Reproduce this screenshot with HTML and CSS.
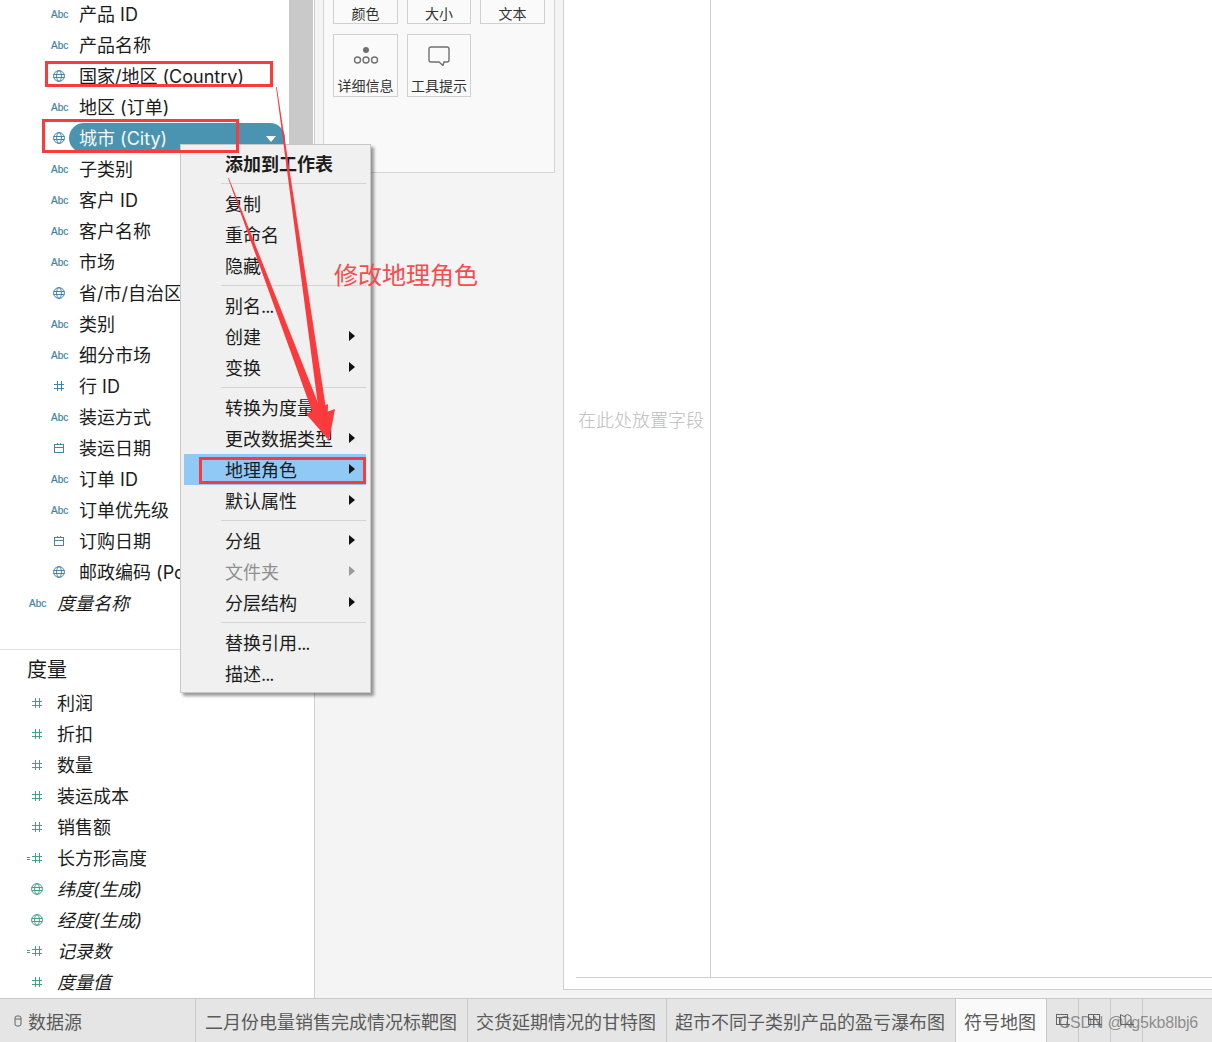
FILE: index.html
```html
<!DOCTYPE html>
<html lang="zh-CN">
<head>
  <meta charset="UTF-8" />
  <title>符号地图</title>
  <link rel="stylesheet" href="styles.css">
</head>
<body>
  <svg class="defs" width="0" height="0">
    <symbol id="globe" viewBox="0 0 12 12">
      <circle cx="6" cy="6" r="5.400" />
      <ellipse cx="6" cy="6" rx="2.400" ry="5.400" />
      <path d="M.6 4.500h10.800M.6 7.500h10.800" />
    </symbol>
    <symbol id="hash" viewBox="0 0 12 12">
      <path d="M4.500 1v10M8.500 1v10M1 4.500h10M1 8.500h10" />
    </symbol>
    <symbol id="date" viewBox="0 0 12 12">
      <rect x="1.500" y="2.500" width="9" height="8" />
      <path d="M1.500 5.500h9M4.500 1v2M7.500 1v2" />
    </symbol>
  </svg>

  <div class="app">
    <div class="main">
      <aside class="side">
        <div class="dims">
          <div class="dim-list">
            <div class="row dim"><span class="abc">Abc</span><span class="name">产品 ID</span></div>
            <div class="row dim"><span class="abc">Abc</span><span class="name">产品名称</span></div>
            <div class="row dim"><span class="ico"><svg><use href="#globe"/></svg></span><span class="name">国家/地区 (Country)</span></div>
            <div class="row dim"><span class="abc">Abc</span><span class="name">地区 (订单)</span></div>
            <div class="row dim selected"><span class="ico"><svg><use href="#globe"/></svg></span><span class="name">城市 (City)<i class="caret"></i></span></div>
            <div class="row dim"><span class="abc">Abc</span><span class="name">子类别</span></div>
            <div class="row dim"><span class="abc">Abc</span><span class="name">客户 ID</span></div>
            <div class="row dim"><span class="abc">Abc</span><span class="name">客户名称</span></div>
            <div class="row dim"><span class="abc">Abc</span><span class="name">市场</span></div>
            <div class="row dim"><span class="ico"><svg><use href="#globe"/></svg></span><span class="name">省/市/自治区</span></div>
            <div class="row dim"><span class="abc">Abc</span><span class="name">类别</span></div>
            <div class="row dim"><span class="abc">Abc</span><span class="name">细分市场</span></div>
            <div class="row dim"><span class="ico"><svg><use href="#hash"/></svg></span><span class="name">行 ID</span></div>
            <div class="row dim"><span class="abc">Abc</span><span class="name">装运方式</span></div>
            <div class="row dim"><span class="ico"><svg><use href="#date"/></svg></span><span class="name">装运日期</span></div>
            <div class="row dim"><span class="abc">Abc</span><span class="name">订单 ID</span></div>
            <div class="row dim"><span class="abc">Abc</span><span class="name">订单优先级</span></div>
            <div class="row dim"><span class="ico"><svg><use href="#date"/></svg></span><span class="name">订购日期</span></div>
            <div class="row dim"><span class="ico"><svg><use href="#globe"/></svg></span><span class="name">邮政编码 (Po</span></div>
            <div class="row outer"><span class="abc">Abc</span><span class="name em">度量名称</span></div>
          </div>
          <div class="scrollbar"></div>
        </div>

        <div class="measures">
          <div class="measures-title">度量</div>
          <div class="row meas"><span class="ico"><svg><use href="#hash"/></svg></span><span class="name">利润</span></div>
          <div class="row meas"><span class="ico"><svg><use href="#hash"/></svg></span><span class="name">折扣</span></div>
          <div class="row meas"><span class="ico"><svg><use href="#hash"/></svg></span><span class="name">数量</span></div>
          <div class="row meas"><span class="ico"><svg><use href="#hash"/></svg></span><span class="name">装运成本</span></div>
          <div class="row meas"><span class="ico"><svg><use href="#hash"/></svg></span><span class="name">销售额</span></div>
          <div class="row meas"><span class="ico calc"><b></b><svg><use href="#hash"/></svg></span><span class="name">长方形高度</span></div>
          <div class="row meas"><span class="ico"><svg><use href="#globe"/></svg></span><span class="name em">纬度(生成)</span></div>
          <div class="row meas"><span class="ico"><svg><use href="#globe"/></svg></span><span class="name em">经度(生成)</span></div>
          <div class="row meas"><span class="ico calc"><b></b><svg><use href="#hash"/></svg></span><span class="name em">记录数</span></div>
          <div class="row meas"><span class="ico"><svg><use href="#hash"/></svg></span><span class="name em">度量值</span></div>
        </div>
      </aside>

      <section class="middle">
        <div class="marks">
          <div class="mark-grid">
            <div class="mark tall"><span>颜色</span></div>
            <div class="mark tall"><span>大小</span></div>
            <div class="mark tall"><span>文本</span></div>
            <div class="mark">
              <svg class="mark-icon" viewBox="0 0 26 20">
                <circle class="solid" cx="13" cy="4" r="3" />
                <circle cx="4.500" cy="14" r="3" />
                <circle cx="13" cy="14" r="3" />
                <circle cx="21.500" cy="14" r="3" />
              </svg>
              <span>详细信息</span>
            </div>
            <div class="mark">
              <svg class="mark-icon" viewBox="0 0 26 20">
                <path d="M5 1h16a2 2 0 0 1 2 2v11a2 2 0 0 1-2 2h-3l-1 3.500-4-3.500H5a2 2 0 0 1-2-2V3a2 2 0 0 1 2-2z" />
              </svg>
              <span>工具提示</span>
            </div>
          </div>
        </div>
      </section>

      <section class="view">
        <div class="view-top">
          <div class="drop-col">在此处放置字段</div>
        </div>
        <div class="view-bottom"></div>
      </section>
    </div>

    <footer class="tabs">
      <div class="tab source">
        <svg class="db" viewBox="0 0 8 12"><rect x="1" y="1" width="6" height="10" rx="2" /><path d="M1 4h6" /></svg>
        数据源
      </div>
      <div class="tab wide">二月份电量销售完成情况标靶图</div>
      <div class="tab tight">交货延期情况的甘特图</div>
      <div class="tab tight">超市不同子类别产品的盈亏瀑布图</div>
      <div class="tab tight active">符号地图</div>
      <div class="tab-btn"><svg viewBox="0 0 22 18"><rect x="4.500" y="4.500" width="11" height="10" /><path d="M4.500 7.500h11M7.500 7.500v7M12 14.500h6M15 11.500v6" /></svg></div>
      <div class="tab-btn"><svg viewBox="0 0 22 18"><rect x="4.500" y="4.500" width="11" height="10" /><path d="M9.500 4.500v10M4.500 9.500h11M12 14.500h6M15 11.500v6" /></svg></div>
      <div class="tab-btn"><svg viewBox="0 0 22 18"><path d="M4.500 4.500l3.500 2 3.500-2 3.500 2v8h-10.500zM12 14.500h6M15 11.500v6" /></svg></div>
    </footer>
  </div>

  <div class="menu">
    <div class="menu-item strong">添加到工作表</div>
    <div class="sep"></div>
    <div class="menu-item">复制</div>
    <div class="menu-item">重命名</div>
    <div class="menu-item">隐藏</div>
    <div class="sep"></div>
    <div class="menu-item">别名<span class="dots">...</span></div>
    <div class="menu-item sub">创建</div>
    <div class="menu-item sub">变换</div>
    <div class="sep"></div>
    <div class="menu-item">转换为度量</div>
    <div class="menu-item sub">更改数据类型</div>
    <div class="menu-item sub hot">地理角色</div>
    <div class="menu-item sub">默认属性</div>
    <div class="sep"></div>
    <div class="menu-item sub">分组</div>
    <div class="menu-item sub off">文件夹</div>
    <div class="menu-item sub">分层结构</div>
    <div class="sep"></div>
    <div class="menu-item">替换引用<span class="dots">...</span></div>
    <div class="menu-item">描述<span class="dots">...</span></div>
  </div>

  <!-- annotations drawn on top of the screenshot -->
  <div class="box box-country"></div>
  <div class="box box-city"></div>
  <div class="box box-geo"></div>
  <svg class="arrows" viewBox="0 0 1212 1042">
    <polygon points="276,87 276.800,87 326.500,412 335,409 329,441 313,414 319,413" />
    <polygon points="228,178 228.800,178 320,408 328,404 327,438 306,414 312,411" />
  </svg>
  <div class="note">修改地理角色</div>
  <div class="watermark">CSDN @kg5kb8lbj6</div>
</body>
</html>
```

FILE: styles.css
```css
* {
  box-sizing: border-box;
}
html, body {
  margin: 0;
  height: 100%;
  overflow: hidden;
}
body {
  position: relative;
  background: #fff;
  color: #1c1c1c;
  font-family: "Inter", "Noto Sans CJK SC", sans-serif;
  font-size: 18px;
}
.defs {
  position: absolute;
}
.app {
  display: flex;
  flex-direction: column;
  height: 1042px;
}
.main {
  display: flex;
  flex: 1;
  min-height: 0;
  background: #f4f4f4;
}

/* data pane */
.side {
  width: 315px;
  background: #fff;
  border-right: 1px solid #cfcfcf;
  display: flex;
  flex-direction: column;
  overflow: hidden;
}
.dims {
  display: flex;
  height: 650px;
  border-bottom: 1px solid #e2e2e2;
}
.dim-list {
  width: 289px;
  margin-top: -2px;
}
.scrollbar {
  width: 24px;
  background: #c9c9c9;
  height: 400px;
}
.row {
  display: flex;
  align-items: center;
  height: 31px;
  line-height: 31px;
  white-space: nowrap;
}
.name {
  padding-top: 2px;
}
.dim .abc, .dim .ico {
  width: 79px;
}
.dim .abc {
  padding-left: 51px;
}
.dim .ico {
  padding-left: 50px;
}
.outer .abc, .meas .ico {
  width: 57px;
}
.outer .abc {
  padding-left: 29px;
}
.meas .ico {
  padding-left: 28px;
}
.abc {
  padding-top: 2px;
  font-family: "Liberation Sans", sans-serif;
  font-size: 10px;
  color: #3f7f9f;
  -webkit-text-stroke: 0.2px #3f7f9f;
}
.ico {
  display: flex;
  align-items: center;
  align-self: flex-start;
  margin-top: 10px;
  color: #4785a3;
}
.ico svg {
  width: 12px;
  height: 12px;
  margin-left: 3px;
  fill: none;
  stroke: currentColor;
  stroke-width: 1;
}
.meas .ico {
  color: #45a17f;
}
.calc b {
  width: 3px;
  height: 3px;
  margin-left: 0;
  margin-right: 1px;
  border-top: 1px solid currentColor;
  border-bottom: 1px solid currentColor;
}
.meas .ico.calc {
  padding-left: 27px;
}
.calc svg {
  margin-left: 0;
}
.em {
  font-style: italic;
}
.selected .ico {
  width: 69px;
}
.selected .name {
  flex: 1;
  display: flex;
  align-items: center;
  justify-content: space-between;
  height: 30px;
  margin-right: 4px;
  padding: 2px 9px 0 10px;
  background: #4a94b2;
  color: #f4f8fa;
  border-radius: 15px;
}
.caret {
  width: 0;
  height: 0;
  border-left: 5px solid transparent;
  border-right: 5px solid transparent;
  border-top: 6px solid #fff;
}
.measures {
  flex: 1;
}
.measures-title {
  height: 37px;
  line-height: 40px;
  padding-left: 27px;
  font-size: 20px;
}

/* marks card */
.middle {
  width: 248px;
  padding-left: 8px;
}
.marks {
  width: 232px;
  height: 173px;
  background: #f9f9f9;
  border: 1px solid #d5d5d5;
  border-top: 0;
  padding: 0 9px;
  overflow: hidden;
}
.mark-grid {
  display: grid;
  grid-template-columns: 65px 64px 65px;
  column-gap: 9px;
  row-gap: 10px;
  margin-top: -40px;
}
.mark {
  display: flex;
  flex-direction: column;
  align-items: center;
  justify-content: flex-end;
  height: 63px;
  background: #fafafa;
  border: 1px solid #d0d0d0;
  font-size: 14px;
  line-height: 18px;
  color: #333;
  padding-bottom: 1px;
}
.mark.tall {
  height: 64px;
  padding-bottom: 0;
}
.mark-icon {
  width: 26px;
  height: 20px;
  margin-bottom: 11px;
  fill: none;
  stroke: #707070;
  stroke-width: 1.4;
}
.mark-icon .solid {
  fill: #707070;
  stroke: none;
}

/* view */
.view {
  flex: 1;
  display: flex;
  flex-direction: column;
  margin-bottom: 8px;
  background: #fff;
  border-left: 1px solid #cfcfcf;
  border-bottom: 1px solid #cfcfcf;
}
.view-top {
  flex: 1;
  display: flex;
}
.drop-col {
  width: 147px;
  display: flex;
  align-items: flex-start;
  justify-content: flex-end;
  padding: 408px 6px 0 0;
  line-height: 26px;
  border-right: 1px solid #cfcfcf;
  color: #bcbcbc;
  font-weight: 300;
}
.view-bottom {
  height: 12px;
  margin-left: 12px;
  border-top: 1px solid #cfcfcf;
}

/* sheet tabs */
.tabs {
  display: flex;
  height: 44px;
  background: #e5e5e5;
  border-top: 1px solid #c9c9c9;
  color: #5a5a5a;
}
.tab {
  display: flex;
  align-items: center;
  padding: 0 9px;
  border-right: 1px solid #c9c9c9;
  white-space: nowrap;
}
.tab.wide {
  padding-right: 10px;
}
.tab.tight {
  padding: 0 10px 0 8px;
}
.tab.source {
  width: 196px;
  padding-left: 14px;
}
.db {
  width: 8px;
  height: 12px;
  margin-right: 6px;
  fill: none;
  stroke: #666;
}
.tab.active {
  background: #fafafa;
}
.tab-btn {
  width: 32px;
  display: flex;
  align-items: center;
  justify-content: center;
  border-right: 1px solid #c9c9c9;
}
.tab-btn svg {
  width: 22px;
  height: 18px;
  margin-top: -3px;
  fill: none;
  stroke: #666;
}

/* context menu */
.menu {
  position: absolute;
  left: 180px;
  top: 144px;
  width: 191px;
  padding: 3px 4px 3px 3px;
  background: #f0f0f0;
  border: 1px solid #c8c8c8;
  box-shadow: 3px 3px 3px rgba(0, 0, 0, 0.4);
}
.menu-item {
  position: relative;
  height: 31px;
  line-height: 33px;
  padding-left: 41px;
  white-space: nowrap;
  color: #1c1c1c;
}
.dots {
  letter-spacing: -1px;
}
.strong {
  font-weight: bold;
}
.off {
  color: #8f8f8f;
}
.hot {
  background: #90c8f6;
}
.sub::after {
  content: "";
  position: absolute;
  right: 11px;
  top: 10px;
  border-left: 6px solid #111;
  border-top: 5px solid transparent;
  border-bottom: 5px solid transparent;
}
.off::after {
  border-left-color: #9a9a9a;
}
.sep {
  height: 9px;
  margin-left: 37px;
  display: flex;
  align-items: center;
}
.sep::before {
  content: "";
  flex: 1;
  height: 1px;
  background: #d4d4d4;
}

/* annotations */
.box {
  position: absolute;
  border: 3px solid #fb3a3d;
}
.box-country {
  left: 45px;
  top: 61px;
  width: 228px;
  height: 26px;
}
.box-city {
  left: 42px;
  top: 119px;
  width: 197px;
  height: 34px;
}
.box-geo {
  left: 199px;
  top: 457px;
  width: 167px;
  height: 27px;
}
.arrows {
  position: absolute;
  left: 0;
  top: 0;
  width: 1212px;
  height: 1042px;
  fill: #fb3a3d;
  pointer-events: none;
}
.note {
  position: absolute;
  left: 334px;
  top: 258px;
  font-size: 24px;
  line-height: 36px;
  color: #fb4a4c;
}
.watermark {
  position: absolute;
  right: 14px;
  top: 1012px;
  font-family: "Liberation Sans", sans-serif;
  font-size: 16px;
  letter-spacing: -0.2px;
  line-height: 22px;
  color: rgba(90, 90, 90, 0.65);
}
```
